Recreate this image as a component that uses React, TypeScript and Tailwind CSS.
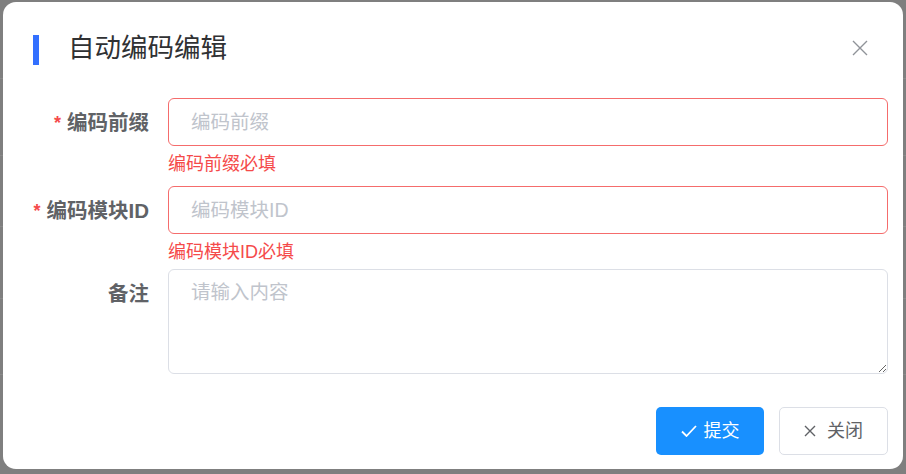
import React from "react";

const font = { fontFamily: '"Liberation Sans", "Noto Sans CJK SC", sans-serif' };

function FieldLabel({ text, required }: { text: string; required?: boolean }) {
  return (
    <div className="w-[165px] shrink-0 pr-[19px] h-[50px] flex items-center justify-end text-[20.5px] font-bold text-[#606266]">
      {required && <span className="text-[#f54a4a] mr-[6px] text-[18px]">*</span>}
      <span>{text}</span>
    </div>
  );
}

function ErrorInput({ placeholder, error, gap }: { placeholder: string; error: string; gap: string }) {
  return (
    <div className="flex-1">
      <input
        placeholder={placeholder}
        className="w-[720px] h-[48px] rounded-[6px] border border-[#f56c6c] pl-[22px] text-[19.5px] text-[#606266] placeholder:text-[#c0c4cc] outline-none"
      />
      <div className={`${gap} pt-[6px] text-[18px] leading-[24px] text-[#f54a4a]`}>{error}</div>
    </div>
  );
}

export default function App() {
  return (
    <div className="relative w-[906px] h-[474px] bg-[#7f7f7f] overflow-hidden" style={font}>
      {/* page behind the mask */}
      <div className="flex flex-col">
        {[79, 77, 71, 72, 76].map((h, i) => (
          <div key={i} className="border-b border-[#8a8a8a]" style={{ height: h }} />
        ))}
      </div>

      <div className="absolute left-[3px] top-[2px] w-[900px] h-[467px] rounded-[13px] bg-white">
        <div className="flex items-center pt-[33px] pl-[30px] pr-[35px]">
          <div className="w-[6px] h-[30px] bg-[#3370ff]" />
          <div className="ml-[29px] -mt-[4px] text-[26.5px] leading-[30px] text-[#303133]">自动编码编辑</div>
          <div className="ml-auto -mt-[4px]">
            <svg width="16" height="16" viewBox="0 0 16 16">
              <path d="M1 1L15 15M15 1L1 15" stroke="#909399" strokeWidth="1.4" fill="none" />
            </svg>
          </div>
        </div>

        <div className="mt-[33px]">
          <div className="flex">
            <FieldLabel text="编码前缀" required />
            <ErrorInput placeholder="编码前缀" error="编码前缀必填" gap="h-[40px]" />
          </div>
          <div className="flex">
            <FieldLabel text="编码模块ID" required />
            <ErrorInput placeholder="编码模块ID" error="编码模块ID必填" gap="h-[35px]" />
          </div>
          <div className="flex">
            <FieldLabel text="备注" />
            <textarea
              placeholder="请输入内容"
              className="w-[720px] h-[105px] rounded-[6px] border border-[#dcdfe6] px-[22px] py-[8px] text-[19.5px] leading-[29px] text-[#606266] placeholder:text-[#c0c4cc] outline-none"
            />
          </div>
        </div>

        <div className="flex justify-end gap-[15px] pr-[15px] mt-[33px]">
          <button className="w-[108px] h-[48px] rounded-[5px] bg-[#1890ff] text-white text-[18px] flex items-center justify-center gap-[7px]">
            <svg width="16" height="12" viewBox="0 0 16 12">
              <path d="M1 6.5L5.5 11L15 1" stroke="white" strokeWidth="1.8" fill="none" />
            </svg>
            <span>提交</span>
          </button>
          <button className="w-[109px] h-[48px] rounded-[5px] border border-[#dcdfe6] bg-white text-[#606266] text-[18px] flex items-center justify-center gap-[11px]">
            <svg width="12" height="12" viewBox="0 0 12 12">
              <path d="M1 1L11 11M11 1L1 11" stroke="#606266" strokeWidth="1.4" fill="none" />
            </svg>
            <span>关闭</span>
          </button>
        </div>
      </div>
    </div>
  );
}
